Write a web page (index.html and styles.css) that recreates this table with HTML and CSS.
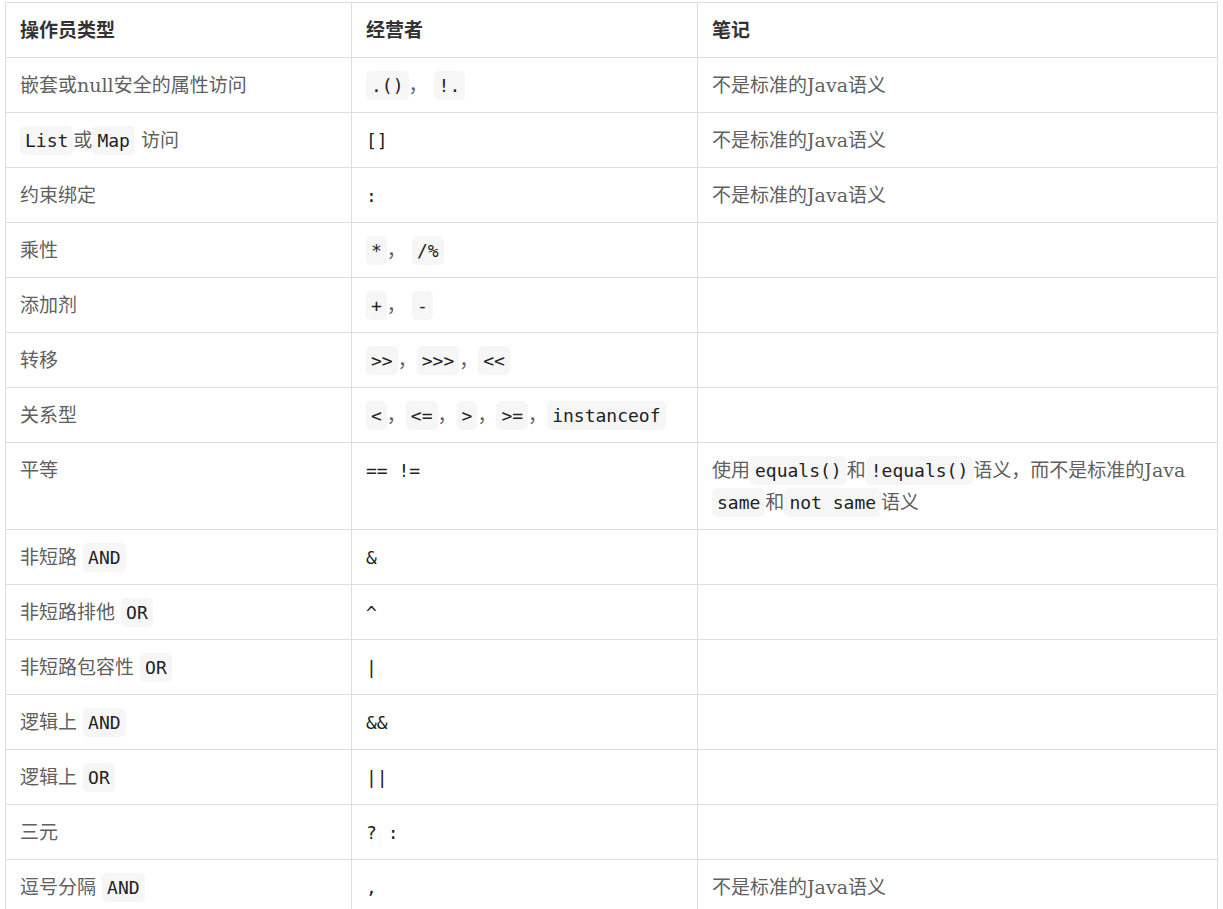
FILE: index.html
```html
<!DOCTYPE html>
<html lang="zh-CN">
<head>
<meta charset="utf-8">
<title>操作员类型</title>
<link rel="stylesheet" href="styles.css">
</head>
<body>
<div class="page">
<table class="ops">
  <colgroup>
    <col class="c1"><col class="c2"><col class="c3">
  </colgroup>
  <thead>
    <tr><th>操作员类型</th><th>经营者</th><th>笔记</th></tr>
  </thead>
  <tbody>
    <tr><td>嵌套或null安全的属性访问</td><td><code>.()</code>， <code>!.</code></td><td>不是标准的Java语义</td></tr>
    <tr><td><code>List</code>或<code>Map</code> 访问</td><td><span class="op">[]</span></td><td>不是标准的Java语义</td></tr>
    <tr><td>约束绑定</td><td><span class="op">:</span></td><td>不是标准的Java语义</td></tr>
    <tr><td>乘性</td><td><code>*</code>， <code>/%</code></td><td></td></tr>
    <tr><td>添加剂</td><td><code>+</code>， <code>-</code></td><td></td></tr>
    <tr><td>转移</td><td><code>&gt;&gt;</code>，<code>&gt;&gt;&gt;</code>，<code>&lt;&lt;</code></td><td></td></tr>
    <tr><td>关系型</td><td><code>&lt;</code>，<code>&lt;=</code>，<code>&gt;</code>，<code>&gt;=</code>，<code>instanceof</code></td><td></td></tr>
    <tr><td>平等</td><td><span class="op">== !=</span></td><td>使用<code>equals()</code>和<code>!equals()</code>语义，而不是标准的Java <code>same</code>和<code>not same</code>语义</td></tr>
    <tr><td>非短路 <code>AND</code></td><td><span class="op">&amp;</span></td><td></td></tr>
    <tr><td>非短路排他 <code>OR</code></td><td><span class="op">^</span></td><td></td></tr>
    <tr><td>非短路包容性 <code>OR</code></td><td><span class="op">|</span></td><td></td></tr>
    <tr><td>逻辑上 <code>AND</code></td><td><span class="op">&amp;&amp;</span></td><td></td></tr>
    <tr><td>逻辑上 <code>OR</code></td><td><span class="op">||</span></td><td></td></tr>
    <tr><td>三元</td><td><span class="op">? :</span></td><td></td></tr>
    <tr><td>逗号分隔 <code>AND</code></td><td><span class="op">,</span></td><td>不是标准的Java语义</td></tr>
  </tbody>
</table>
</div>
</body>
</html>
```

FILE: styles.css
```css
html, body {
  margin: 0;
  padding: 0;
  background: #ffffff;
}

.page {
  padding: 2px 5px 0 5px;
}

.ops {
  border-collapse: collapse;
  table-layout: fixed;
  width: 1212px;
  font-family: "DejaVu Serif", "Noto Sans CJK SC", serif;
  font-size: 19px;
  line-height: 32px;
  color: #606060;
}

.c1 { width: 346px; }
.c2 { width: 346px; }
.c3 { width: 520px; }

.ops th,
.ops td {
  border: 1px solid #dedede;
  padding: 11px 14px;
  height: 32px;
  text-align: left;
  vertical-align: top;
}

.ops th {
  font-weight: 700;
  color: #333333;
}

.ops code,
.ops .op {
  font-family: "DejaVu Sans Mono", monospace;
  font-size: 18px;
  line-height: 1;
  color: #222222;
}

.ops code {
  background: #f6f6f6;
  padding: 4px 5px;
  border-radius: 5px;
}
```
